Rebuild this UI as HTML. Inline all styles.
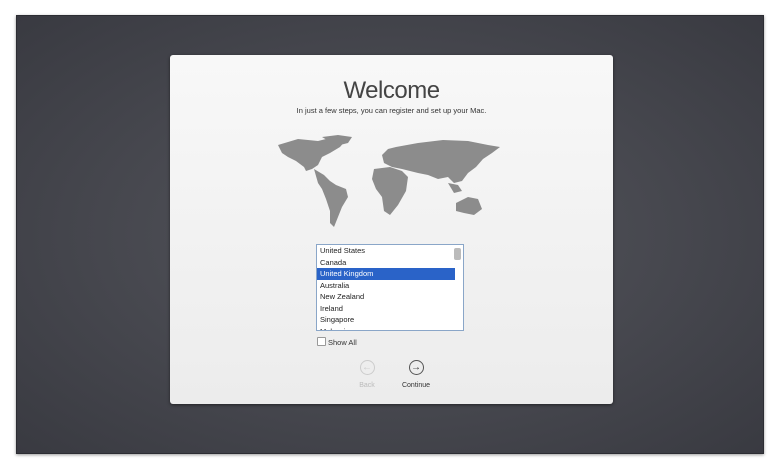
<!DOCTYPE html>
<html><head><style>
body{margin:0;width:780px;height:470px;background:#fff;position:relative;overflow:hidden;font-family:"Liberation Sans",sans-serif}
#frame{position:absolute;left:16px;top:15px;width:748px;height:439px;background:radial-gradient(ellipse at 50% 50%,#55565d 0%,#46474e 55%,#393a41 100%);box-shadow:0 1px 3px rgba(0,0,0,.4);border:1px solid #2c2d33;box-sizing:border-box}
#panel{position:absolute;left:170px;top:55px;width:443px;height:349px;background:linear-gradient(#f8f8f8,#ececec);border-radius:3px;box-shadow:0 1px 3px rgba(0,0,0,.5)}
h1{position:absolute;left:0;width:443px;top:22px;margin:0;text-align:center;font-weight:normal;font-size:24px;color:#444;letter-spacing:-0.5px}
.sub{position:absolute;left:0;width:443px;top:51px;text-align:center;font-size:7.5px;color:#333}
#list{position:absolute;left:146px;top:189px;width:148px;height:87px;background:#fff;border:1px solid #8aa6c8;box-sizing:border-box;overflow:hidden;font-size:7.5px;color:#222}
#list div{height:11.5px;line-height:11.5px;padding-left:3px}
#list .sel{background:#2a63c8;color:#fff;margin-right:8px}
#sb{position:absolute;right:2px;top:3px;width:4px;height:66px;background:#bbb;border-radius:2px}
.cb{position:absolute;left:147px;top:282px;font-size:7.5px;color:#333}
.cb span{display:inline-block;width:7px;height:7px;border:1px solid #999;background:#fff;vertical-align:-1px;margin-right:2px;border-radius:1px}
.btn{position:absolute;top:305px;text-align:center;font-size:7px}
.circ{width:15px;height:15px;border-radius:50%;margin:0 auto 7px;font-size:10px;line-height:13px;box-sizing:border-box}
</style></head><body>
<div id="frame"></div>
<div id="panel">
<h1>Welcome</h1>
<div class="sub">In just a few steps, you can register and set up your Mac.</div>
<svg style="position:absolute;left:108px;top:80px" width="226" height="95" viewBox="0 0 226 95">
<g fill="#8c8c8c">
<path d="M0,10 L20,4 L40,6 L52,3 L68,5 L62,12 L52,18 L44,22 L40,30 L34,34 L28,36 L26,32 L18,26 L10,22 L4,18Z"/>
<path d="M44,2 L60,0 L74,2 L70,8 L62,10 L54,8Z"/>
<path d="M36,34 L46,40 L52,46 L58,50 L68,54 L70,62 L64,72 L60,82 L56,92 L52,88 L52,76 L48,64 L44,54 L40,48Z"/>
<path d="M104,20 L110,14 L118,12 L140,8 L165,5 L190,6 L210,10 L222,12 L214,18 L205,24 L198,32 L190,38 L184,46 L176,48 L170,42 L160,44 L150,40 L140,38 L132,36 L124,34 L114,32 L106,28Z"/>
<path d="M96,34 L112,32 L124,36 L130,42 L128,56 L120,70 L112,80 L106,76 L104,62 L98,54 L94,44Z"/>
<path d="M178,68 L190,62 L200,64 L204,74 L196,80 L186,78 L178,76Z"/>
<path d="M170,48 L180,50 L184,56 L176,58Z"/>
</g></svg>
<div id="list">
<div>United States</div><div>Canada</div><div class="sel">United Kingdom</div><div>Australia</div><div>New Zealand</div><div>Ireland</div><div>Singapore</div><div>Malaysia</div>
<div id="sb"></div>
</div>
<div class="cb"><span></span>Show All</div>
<div class="btn" style="left:183px;width:28px;color:#bbb"><div class="circ" style="border:1px solid #ccc;color:#ccc">&#8592;</div>Back</div>
<div class="btn" style="left:226px;width:40px;color:#333"><div class="circ" style="border:1.5px solid #555;color:#333">&#8594;</div>Continue</div>
</div>
</body></html>
